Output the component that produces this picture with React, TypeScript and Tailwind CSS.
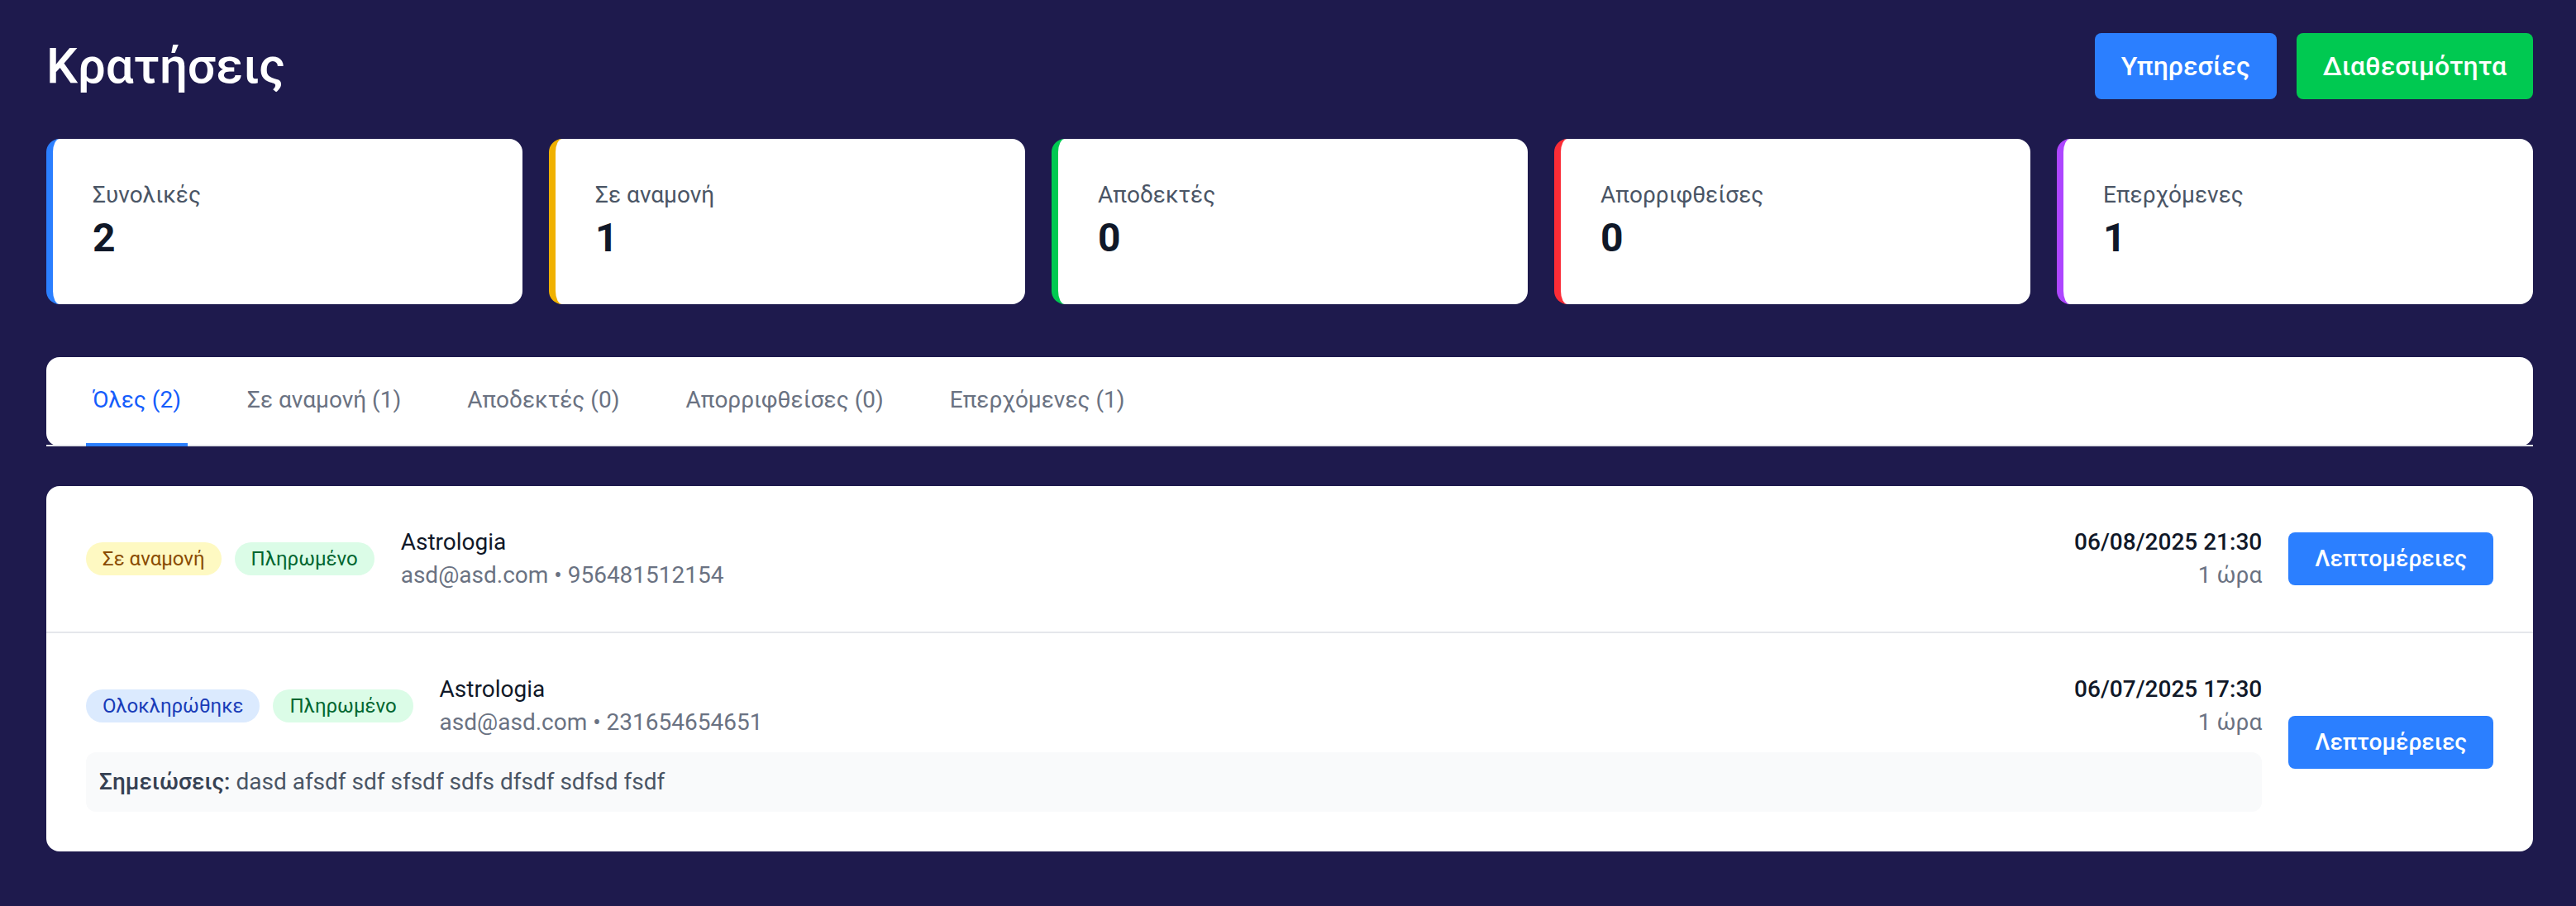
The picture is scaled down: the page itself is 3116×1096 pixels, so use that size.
import React from "react";

type Stat = { label: string; value: number; border: string };

const stats: Stat[] = [
  { label: "Συνολικές", value: 2, border: "border-blue-500" },
  { label: "Σε αναμονή", value: 1, border: "border-yellow-500" },
  { label: "Αποδεκτές", value: 0, border: "border-green-500" },
  { label: "Απορριφθείσες", value: 0, border: "border-red-500" },
  { label: "Επερχόμενες", value: 1, border: "border-purple-500" },
];

const tabs = [
  "Όλες (2)",
  "Σε αναμονή (1)",
  "Αποδεκτές (0)",
  "Απορριφθείσες (0)",
  "Επερχόμενες (1)",
];

type Booking = {
  status: string;
  statusClass: string;
  service: string;
  email: string;
  phone: string;
  date: string;
  duration: string;
  notes?: string;
};

const bookings: Booking[] = [
  {
    status: "Σε αναμονή",
    statusClass: "bg-yellow-100 text-yellow-800",
    service: "Astrologia",
    email: "asd@asd.com",
    phone: "956481512154",
    date: "06/08/2025 21:30",
    duration: "1 ώρα",
  },
  {
    status: "Ολοκληρώθηκε",
    statusClass: "bg-blue-100 text-blue-800",
    service: "Astrologia",
    email: "asd@asd.com",
    phone: "231654654651",
    date: "06/07/2025 17:30",
    duration: "1 ώρα",
    notes: "dasd afsdf sdf sfsdf sdfs dfsdf sdfsd fsdf",
  },
];

export default function App() {
  return (
    <div className="min-h-screen bg-indigo-950 font-['Roboto',sans-serif]">
      {/* screenshot is at 2x, so the page is laid out at 1x and zoomed */}
      <div className="[zoom:2] pl-7 pr-[26px] pt-5 pb-8">
        {/* Header */}
        <div className="flex items-center justify-between mb-6">
          <h1 className="text-3xl font-medium text-white">Κρατήσεις</h1>
          <div className="flex gap-3">
            <button className="bg-blue-500 text-white font-medium px-4 py-2 rounded">
              Υπηρεσίες
            </button>
            <button className="bg-green-500 text-white font-medium px-4 py-2 rounded">
              Διαθεσιμότητα
            </button>
          </div>
        </div>

        {/* Stats */}
        <div className="grid grid-cols-5 gap-4 mb-8">
          {stats.map((s) => (
            <div
              key={s.label}
              className={`bg-white rounded-lg border-l-4 ${s.border} p-6`}
            >
              <p className="text-sm text-gray-600">{s.label}</p>
              <p className="text-2xl font-bold text-gray-900">{s.value}</p>
            </div>
          ))}
        </div>

        {/* Tabs */}
        <div className="bg-white rounded-lg mb-6">
          <div className="border-b border-gray-200 px-6">
            <nav className="-mb-px flex gap-8">
              {tabs.map((t, i) => (
                <button
                  key={t}
                  className={
                    i === 0
                      ? "py-4 px-1 border-b-2 border-blue-500 text-sm text-blue-600"
                      : "py-4 px-1 border-b-2 border-transparent text-sm text-gray-500"
                  }
                >
                  {t}
                </button>
              ))}
            </nav>
          </div>
        </div>

        {/* Bookings */}
        <div className="bg-white rounded-lg divide-y divide-gray-200">
          {bookings.map((b) => (
            <div key={b.date} className="flex items-center gap-4 px-6 py-6">
              <div className="flex-1">
                <div className="flex items-center justify-between">
                  <div className="flex items-center gap-4">
                    <div className="flex gap-2">
                      <span
                        className={`px-2.5 py-0.5 rounded-full text-xs ${b.statusClass}`}
                      >
                        {b.status}
                      </span>
                      <span className="px-2.5 py-0.5 rounded-full text-xs bg-green-100 text-green-800">
                        Πληρωμένο
                      </span>
                    </div>
                    <div>
                      <p className="text-sm text-gray-900">{b.service}</p>
                      <p className="text-sm text-gray-500">
                        {b.email} • {b.phone}
                      </p>
                    </div>
                  </div>
                  <div className="text-right">
                    <p className="text-sm font-medium text-gray-900">{b.date}</p>
                    <p className="text-sm text-gray-500">{b.duration}</p>
                  </div>
                </div>
                {b.notes && (
                  <div className="mt-2 p-2 bg-gray-50 rounded-md text-sm text-gray-600">
                    <span className="font-medium text-gray-700">
                      Σημειώσεις:
                    </span>{" "}
                    {b.notes}
                  </div>
                )}
              </div>
              <button className="bg-blue-500 text-white text-sm font-medium px-4 py-1.5 rounded">
                Λεπτομέρειες
              </button>
            </div>
          ))}
        </div>
      </div>
    </div>
  );
}
